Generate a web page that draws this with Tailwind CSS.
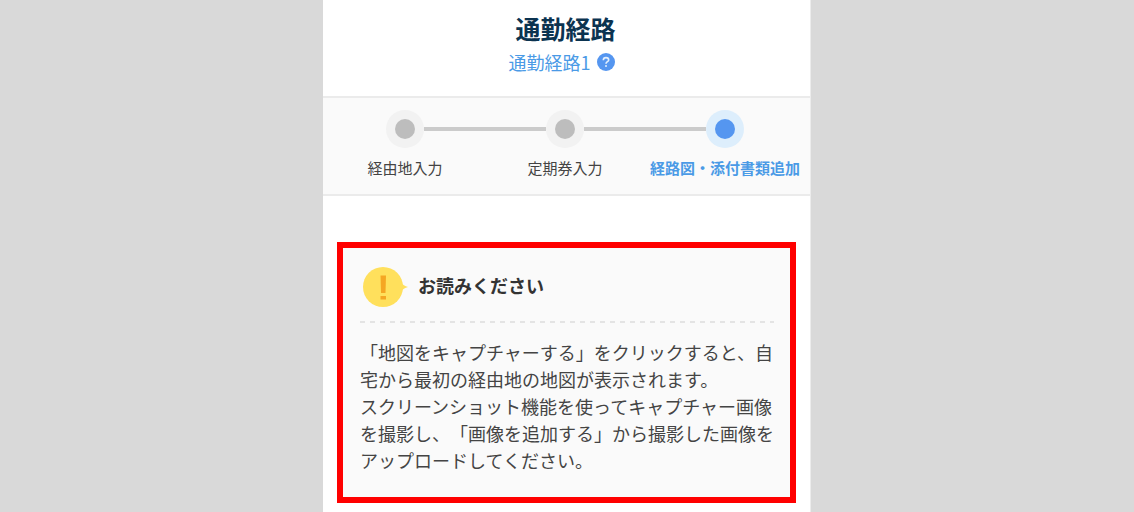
<!DOCTYPE html>
<html lang="ja">
<head>
<meta charset="utf-8">
<meta name="viewport" content="width=device-width, initial-scale=1">
<title>通勤経路</title>
<script src="https://cdn.jsdelivr.net/npm/@tailwindcss/browser@4"></script>
</head>
<body class="bg-[#d9d9d9] font-['Noto_Sans_CJK_JP',sans-serif] text-[#444] [text-spacing-trim:space-all]">
<main class="mx-auto min-h-screen max-w-[488px] border-r border-[#ececec] bg-white">
  <header class="flex flex-col items-center gap-1 border-b-2 border-[#ebebeb] pt-3 pr-0.5 pb-5">
    <h1 class="text-[25px] leading-8 font-bold text-[#0b3350]">通勤経路</h1>
    <div class="flex items-center gap-1.5 pr-2">
      <p class="text-lg leading-7 text-[#4a9ae6]">通勤経路1</p>
      <button type="button" aria-label="ヘルプ" class="size-[18px]">
        <svg viewBox="0 0 18 18" class="size-[18px]" fill="none">
          <circle cx="9" cy="9" r="9" fill="#5596f0"/>
          <path d="M6.300 7.200C6.300 5.500 7.400 4.600 9 4.600S11.700 5.500 11.700 6.900C11.700 8.800 9 8.600 9 10.800" stroke="#e3effd" stroke-width="1.600"/>
          <circle cx="9" cy="13" r="1" fill="#e3effd"/>
        </svg>
      </button>
    </div>
  </header>

  <nav aria-label="入力ステップ" class="border-b-2 border-[#ebebeb] bg-[#fafafa] pt-3 pr-[5px] pb-[14px] pl-0.5">
    <ol class="grid grid-cols-3 text-[15px] leading-6">
      <li class="flex flex-col items-center gap-2">
        <div class="flex w-full items-center">
          <span class="h-1 flex-1"></span>
          <span class="flex size-[38px] items-center justify-center rounded-full bg-[#f2f2f2]"><span class="size-5 rounded-full bg-[#bdbdbd]"></span></span>
          <span class="h-1 flex-1 bg-[#cbcbcb]"></span>
        </div>
        <span class="whitespace-nowrap">経由地入力</span>
      </li>
      <li class="flex flex-col items-center gap-2">
        <div class="flex w-full items-center">
          <span class="h-1 flex-1 bg-[#cbcbcb]"></span>
          <span class="flex size-[38px] items-center justify-center rounded-full bg-[#f2f2f2]"><span class="size-5 rounded-full bg-[#bdbdbd]"></span></span>
          <span class="h-1 flex-1 bg-[#cbcbcb]"></span>
        </div>
        <span class="whitespace-nowrap">定期券入力</span>
      </li>
      <li aria-current="step" class="flex flex-col items-center gap-2">
        <div class="flex w-full items-center">
          <span class="h-1 flex-1 bg-[#cbcbcb]"></span>
          <span class="flex size-[38px] items-center justify-center rounded-full bg-[#ddeefc]"><span class="size-5 rounded-full bg-[#5596f0]"></span></span>
          <span class="h-1 flex-1"></span>
        </div>
        <span class="font-bold whitespace-nowrap text-[#4a9ae6]">経路図・添付書類追加</span>
      </li>
    </ol>
  </nav>

  <section class="mx-[14px] mt-[46px] border-6 border-[#ff0000] bg-[#fafafa] pt-[19px] pr-3 pb-[23px] pl-[17px]">
    <div class="flex items-start gap-[10px] pl-[3px]">
      <svg viewBox="0 0 45 40" class="h-10 w-[45px]" aria-hidden="true">
        <path d="M38 15C39.500 18 42 19 45 20C42 21 39.500 22 38 25Z" fill="#ffe05c"/>
        <circle cx="20" cy="20" r="20" fill="#ffe05c"/>
        <path d="M17.500 8.500H23L22.500 26H18Z" fill="#f5a623"/>
        <rect x="17.500" y="29" width="5.500" height="3.500" fill="#f5a623"/>
      </svg>
      <h2 class="text-lg leading-9 font-bold text-[#333]">お読みください</h2>
    </div>
    <div class="mt-[14px] mr-1 h-0.5 bg-[repeating-linear-gradient(90deg,#e4e4e4_0,#e4e4e4_5px,transparent_5px,transparent_10px)]"></div>
    <p class="mt-4 text-lg leading-[27px]">「地図をキャプチャーする」をクリックすると、自宅から最初の経由地の地図が表示されます。<br>スクリーンショット機能を使ってキャプチャー画像を撮影し、「画像を追加する」から撮影した画像をアップロードしてください。</p>
  </section>
</main>
</body>
</html>
